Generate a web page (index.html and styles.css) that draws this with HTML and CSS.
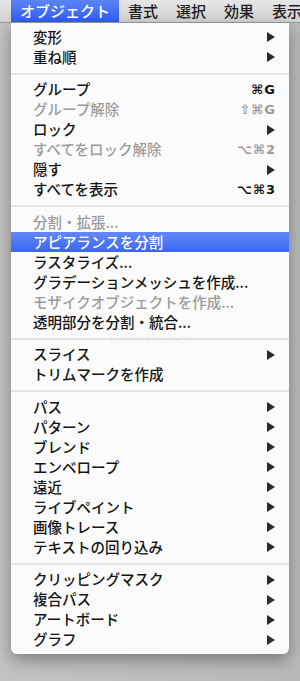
FILE: index.html
```html
<!DOCTYPE html>
<html lang="ja">
<head>
    <meta charset="UTF-8">
    <meta name="viewport" content="width=device-width, initial-scale=1.0">
    <title>オブジェクト メニュー</title>
    <link rel="stylesheet" href="styles.css">
</head>
<body>
    <div class="menubar">
        <span class="bar-item active">オブジェクト</span>
        <span class="bar-item">書式</span>
        <span class="bar-item">選択</span>
        <span class="bar-item">効果</span>
        <span class="bar-item">表示</span>
    </div>

    <div class="menu">
        <div class="item"><span>変形</span><i class="arrow"></i></div>
        <div class="item"><span>重ね順</span><i class="arrow"></i></div>
        <div class="sep"></div>

        <div class="item"><span>グループ</span><span class="key">⌘G</span></div>
        <div class="item off"><span>グループ解除</span><span class="key">⇧⌘G</span></div>
        <div class="item"><span>ロック</span><i class="arrow"></i></div>
        <div class="item off"><span>すべてをロック解除</span><span class="key">⌥⌘2</span></div>
        <div class="item"><span>隠す</span><i class="arrow"></i></div>
        <div class="item"><span>すべてを表示</span><span class="key">⌥⌘3</span></div>
        <div class="sep"></div>

        <div class="item off"><span>分割・拡張...</span></div>
        <div class="item hover"><span>アピアランスを分割</span></div>
        <div class="item"><span>ラスタライズ...</span></div>
        <div class="item"><span>グラデーションメッシュを作成...</span></div>
        <div class="item off"><span>モザイクオブジェクトを作成...</span></div>
        <div class="item"><span>透明部分を分割・統合...</span></div>
        <div class="sep"></div>

        <div class="item"><span>スライス</span><i class="arrow"></i></div>
        <div class="item"><span>トリムマークを作成</span></div>
        <div class="sep"></div>

        <div class="item"><span>パス</span><i class="arrow"></i></div>
        <div class="item"><span>パターン</span><i class="arrow"></i></div>
        <div class="item"><span>ブレンド</span><i class="arrow"></i></div>
        <div class="item"><span>エンベロープ</span><i class="arrow"></i></div>
        <div class="item"><span>遠近</span><i class="arrow"></i></div>
        <div class="item"><span>ライブペイント</span><i class="arrow"></i></div>
        <div class="item"><span>画像トレース</span><i class="arrow"></i></div>
        <div class="item"><span>テキストの回り込み</span><i class="arrow"></i></div>
        <div class="sep"></div>

        <div class="item"><span>クリッピングマスク</span><i class="arrow"></i></div>
        <div class="item"><span>複合パス</span><i class="arrow"></i></div>
        <div class="item"><span>アートボード</span><i class="arrow"></i></div>
        <div class="item"><span>グラフ</span><i class="arrow"></i></div>

        <div class="watermark">Tutorialmaniacs</div>
    </div>
</body>
</html>
```

FILE: styles.css
```css
body {
    margin: 0;
    height: 681px;
    overflow: hidden;
    background: linear-gradient(to right, #c2c2c2 0, #b9b9b9 100%);
    font-family: "Noto Sans CJK JP", sans-serif;
}
.menubar {
    display: flex;
    height: 23px;
    padding-left: 11px;
    background: linear-gradient(to bottom, #e6e6e6 0%, #d2d2d2 100%);
    border-bottom: 1px solid #9c9c9c;
    box-sizing: border-box;
    white-space: nowrap;
    overflow: hidden;
}
.bar-item {
    padding: 0 9px;
    font-size: 15px;
    line-height: 22px;
    color: #1c1c1c;
    font-weight: 500;
}
.bar-item.active {
    color: #fff;
    background: linear-gradient(to bottom, #5c84f6 0%, #2f5ef2 100%);
}
.menu {
    position: relative;
    width: 278px;
    margin-left: 11px;
    padding: 4px 0 4.5px;
    background: #fbfbfb;
    border-radius: 0 0 6px 6px;
    box-shadow: 0 6px 16px rgba(0, 0, 0, 0.35);
}
.item {
    display: flex;
    align-items: center;
    justify-content: space-between;
    height: 20px;
    padding: 0 13px 0 22px;
    font-size: 14.5px;
    line-height: 20px;
    font-weight: 500;
    color: #141414;
    white-space: nowrap;
}
.item span:first-child {
    margin-top: -1px;
}
.item.off {
    color: #9b9b9b;
}
.item.hover {
    color: #fff;
    background: linear-gradient(to bottom, #6389f7 0%, #3a66f2 100%);
}
.key {
    font-family: "DejaVu Sans", sans-serif;
    font-size: 13px;
    font-weight: bold;
    letter-spacing: 1px;
}
.arrow {
    width: 0;
    height: 0;
    margin-right: 1px;
    border-top: 5px solid transparent;
    border-bottom: 5px solid transparent;
    border-left: 8px solid #2b2b2b;
}
.sep {
    height: 12.5px;
    display: flex;
    align-items: center;
}
.sep::before {
    content: "";
    flex: 1;
    height: 2px;
    margin-top: 1px;
    background: #e4e4e4;
}
.watermark {
    position: absolute;
    top: 309px;
    left: 0;
    right: 0;
    text-align: center;
    font-family: "Liberation Sans", sans-serif;
    font-size: 12px;
    line-height: 14px;
    color: rgba(0, 0, 0, 0.06);
}
```
